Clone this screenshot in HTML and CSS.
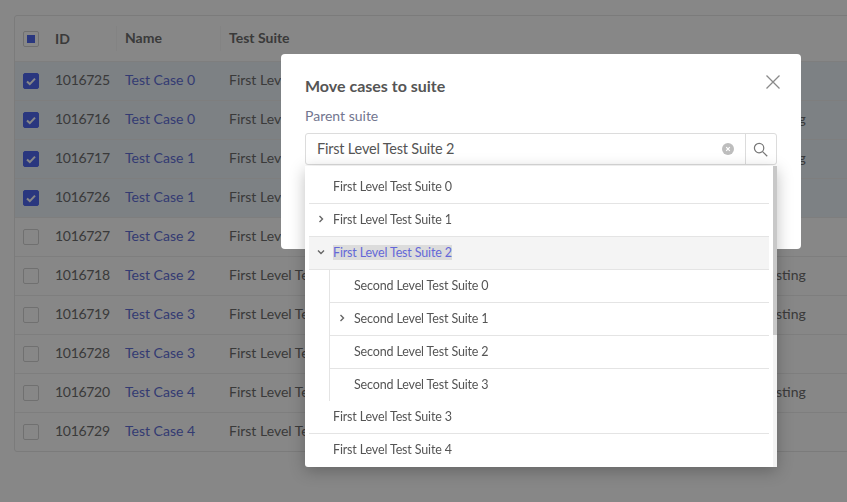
FILE: index.html
```html
<!DOCTYPE html>
<html lang="en">
<head>
    <meta charset="UTF-8">
    <title>Test Cases</title>
    <link rel="stylesheet" href="styles.css">
</head>
<body>
    <div class="page">
        <div class="table">
            <div class="row head">
                <div class="cell-check"><span class="check partial"><i></i></span></div>
                <div class="cell-id">ID</div>
                <div class="cell-name">Name</div>
                <div class="cell-suite">Test Suite</div>
                <div class="cell-extra"></div>
            </div>
            <div class="row selected">
                <div class="cell-check"><span class="check on"><svg viewBox="0 0 16 16"><path d="M4 8.5l2.8 2.6L12 5.6"/></svg></span></div>
                <div class="cell-id">1016725</div>
                <div class="cell-name"><a>Test Case 0</a></div>
                <div class="cell-suite">First Level Test Suite 0</div>
                <div class="cell-extra"></div>
            </div>
            <div class="row selected">
                <div class="cell-check"><span class="check on"><svg viewBox="0 0 16 16"><path d="M4 8.5l2.8 2.6L12 5.6"/></svg></span></div>
                <div class="cell-id">1016716</div>
                <div class="cell-name"><a>Test Case 0</a></div>
                <div class="cell-suite">First Level Test Suite 0</div>
                <div class="cell-extra">Testing</div>
            </div>
            <div class="row selected">
                <div class="cell-check"><span class="check on"><svg viewBox="0 0 16 16"><path d="M4 8.5l2.8 2.6L12 5.6"/></svg></span></div>
                <div class="cell-id">1016717</div>
                <div class="cell-name"><a>Test Case 1</a></div>
                <div class="cell-suite">First Level Test Suite 0</div>
                <div class="cell-extra">Testing</div>
            </div>
            <div class="row selected">
                <div class="cell-check"><span class="check on"><svg viewBox="0 0 16 16"><path d="M4 8.5l2.8 2.6L12 5.6"/></svg></span></div>
                <div class="cell-id">1016726</div>
                <div class="cell-name"><a>Test Case 1</a></div>
                <div class="cell-suite">First Level Test Suite 0</div>
                <div class="cell-extra"></div>
            </div>
            <div class="row">
                <div class="cell-check"><span class="check"></span></div>
                <div class="cell-id">1016727</div>
                <div class="cell-name"><a>Test Case 2</a></div>
                <div class="cell-suite">First Level Test Suite 0</div>
                <div class="cell-extra"></div>
            </div>
            <div class="row">
                <div class="cell-check"><span class="check"></span></div>
                <div class="cell-id">1016718</div>
                <div class="cell-name"><a>Test Case 2</a></div>
                <div class="cell-suite">First Level Test Suite 0</div>
                <div class="cell-extra">Testing</div>
            </div>
            <div class="row">
                <div class="cell-check"><span class="check"></span></div>
                <div class="cell-id">1016719</div>
                <div class="cell-name"><a>Test Case 3</a></div>
                <div class="cell-suite">First Level Test Suite 0</div>
                <div class="cell-extra">Testing</div>
            </div>
            <div class="row">
                <div class="cell-check"><span class="check"></span></div>
                <div class="cell-id">1016728</div>
                <div class="cell-name"><a>Test Case 3</a></div>
                <div class="cell-suite">First Level Test Suite 0</div>
                <div class="cell-extra"></div>
            </div>
            <div class="row">
                <div class="cell-check"><span class="check"></span></div>
                <div class="cell-id">1016720</div>
                <div class="cell-name"><a>Test Case 4</a></div>
                <div class="cell-suite">First Level Test Suite 0</div>
                <div class="cell-extra">Testing</div>
            </div>
            <div class="row">
                <div class="cell-check"><span class="check"></span></div>
                <div class="cell-id">1016729</div>
                <div class="cell-name"><a>Test Case 4</a></div>
                <div class="cell-suite">First Level Test Suite 0</div>
                <div class="cell-extra"></div>
            </div>
        </div>
    </div>

    <div class="overlay">
        <div class="modal">
            <svg class="close" viewBox="0 0 14 14"><path d="M.5.5l13 13M13.5.5l-13 13"/></svg>
            <h2>Move cases to suite</h2>
            <label>Parent suite</label>
            <div class="field">
                <div class="input">
                    <span class="value">First Level Test Suite 2</span>
                    <svg class="clear" viewBox="0 0 12 12"><circle cx="6" cy="6" r="6"/><path d="M4.2 4.2l3.6 3.6M7.8 4.2L4.2 7.8"/></svg>
                </div>
                <div class="search">
                    <svg viewBox="0 0 16 16"><circle cx="6.5" cy="6.5" r="5"/><path d="M10.2 10.2l5 5"/></svg>
                </div>
                <div class="dropdown">
                    <div class="list">
                        <div class="item"><span class="name">First Level Test Suite 0</span></div>
                        <div class="item"><svg class="arrow" viewBox="0 0 8 8"><path d="M2.5 1l3 3-3 3"/></svg><span class="name">First Level Test Suite 1</span></div>
                        <div class="item active"><svg class="arrow" viewBox="0 0 8 8"><path d="M1 2.5l3 3 3-3"/></svg><span class="name">First Level Test Suite 2</span></div>
                        <div class="children">
                            <div class="item"><span class="name">Second Level Test Suite 0</span></div>
                            <div class="item"><svg class="arrow" viewBox="0 0 8 8"><path d="M2.5 1l3 3-3 3"/></svg><span class="name">Second Level Test Suite 1</span></div>
                            <div class="item"><span class="name">Second Level Test Suite 2</span></div>
                            <div class="item last"><span class="name">Second Level Test Suite 3</span></div>
                        </div>
                        <div class="item"><span class="name">First Level Test Suite 3</span></div>
                        <div class="item last"><span class="name">First Level Test Suite 4</span></div>
                    </div>
                    <div class="scrollbar"><div class="thumb"></div></div>
                </div>
            </div>
        </div>
    </div>
</body>
</html>
```

FILE: styles.css
```css
html, body {
    margin: 0;
    height: 100%;
    overflow: hidden;
}

body {
    font-family: 'Lato', 'Open Sans', sans-serif;
    font-size: 14px;
    color: #6e6e6e;
    background-color: #fff;
}

.page {
    padding: 15px 0 0 14px;
}

.table {
    width: 900px;
    border: 1px solid #e8e8e8;
    border-radius: 3px;
}

.row {
    display: flex;
    align-items: center;
    height: 39px;
    border-top: 1px solid #eeeeee;
    box-sizing: border-box;
}

.row.head {
    height: 45px;
    border-top: none;
    font-weight: 700;
}

.row.selected {
    background-color: #ecf3fa;
}

.row > div:not(.cell-check) {
    padding-bottom: 3px;
}

.row.head > div:not(.cell-check) {
    padding-bottom: 1px;
}

.cell-check {
    width: 40px;
    padding-left: 8px;
    box-sizing: border-box;
    display: flex;
}

.cell-id {
    width: 70px;
}

.row:not(.head) .cell-id {
    letter-spacing: -0.3px;
}

.cell-name {
    width: 104px;
}

.head .cell-name, .head .cell-suite {
    margin-left: -9px;
    padding-left: 8px;
    line-height: 24px;
    border-left: 1px solid #f7f7f7;
}

.cell-name a {
    color: #6270d8;
}

.cell-suite {
    width: 533px;
}

.check {
    width: 16px;
    height: 16px;
    box-sizing: border-box;
    border: 1px solid #d4d4d4;
    border-radius: 2px;
    background-color: #fff;
    display: flex;
    align-items: center;
    justify-content: center;
}

.check.on {
    background-color: #5068f0;
    border-color: #5068f0;
}

.check svg {
    width: 16px;
    height: 16px;
    flex: none;
}

.check svg path {
    fill: none;
    stroke: #fff;
    stroke-width: 2;
}

.check.partial i {
    display: block;
    width: 8px;
    height: 8px;
    background-color: #5068f0;
}

.overlay {
    position: fixed;
    top: 0;
    left: 0;
    right: 0;
    bottom: 0;
    background-color: rgba(0, 0, 0, 0.47);
}

.modal {
    position: absolute;
    top: 54px;
    left: 281px;
    width: 520px;
    height: 195px;
    padding: 22px 24px 0;
    box-sizing: border-box;
    background-color: #fff;
    border-radius: 4px;
}

.modal h2 {
    margin: 0;
    font-size: 16px;
    line-height: 19px;
    font-weight: 700;
    color: #555;
}

.modal label {
    display: block;
    margin-top: 12px;
    font-size: 14px;
    line-height: 17px;
    color: #72768f;
}

.close {
    position: absolute;
    top: 21px;
    right: 21px;
    width: 14px;
    height: 14px;
}

.close path {
    fill: none;
    stroke: #8a8a8a;
    stroke-width: 1.3;
}

.field {
    position: relative;
    display: flex;
    height: 32px;
    margin-top: 9px;
    border: 1px solid #dcdcdc;
    border-radius: 3px;
    box-sizing: border-box;
}

.input {
    flex: 1;
    display: flex;
    align-items: center;
    justify-content: space-between;
    padding: 0 11px;
    font-size: 14.5px;
    letter-spacing: -0.2px;
    color: #555;
}

.value {
    margin-bottom: 2px;
}

.clear {
    width: 12px;
    height: 12px;
}

.clear circle {
    fill: #bdbdbd;
}

.clear path {
    fill: none;
    stroke: #fff;
    stroke-width: 1.2;
}

.search {
    width: 31px;
    padding-right: 2px;
    box-sizing: border-box;
    border-left: 1px solid #dcdcdc;
    display: flex;
    align-items: center;
    justify-content: center;
}

.search svg {
    width: 15px;
    height: 15px;
}

.search path, .search circle {
    fill: none;
    stroke: #777;
    stroke-width: 1.3;
}

.dropdown {
    position: absolute;
    top: 32px;
    left: -1px;
    width: 472px;
    height: 301px;
    display: flex;
    background-color: #fff;
    border-radius: 0 0 3px 3px;
    box-shadow: 0 4px 16px rgba(0, 0, 0, 0.25);
    z-index: 2;
}

.list {
    flex: 1;
    padding: 5px 4px 0 4px;
}

.item {
    position: relative;
    display: flex;
    align-items: center;
    height: 33px;
    padding: 0 0 2px 24px;
    box-sizing: border-box;
    border-bottom: 1px solid #e4e4e4;
    font-size: 12.5px;
    letter-spacing: -0.15px;
    color: #555;
}

.item.last {
    border-bottom: none;
}

.children .item.last {
    height: 32px;
}

.item.active {
    background-color: #f4f4f4;
}

.item.active .name {
    color: #6468d8;
    background-color: #dcdcdc;
}

.children {
    margin-left: 20px;
    border-left: 1px solid #e4e4e4;
}

.arrow {
    position: absolute;
    left: 8px;
    top: 11px;
    width: 8px;
    height: 8px;
}

.arrow path {
    fill: none;
    stroke: #666;
    stroke-width: 1.4;
}

.scrollbar {
    width: 4px;
    background-color: #f3f3f3;
}

.thumb {
    height: 169px;
    background-color: #c8c8c8;
}
```
